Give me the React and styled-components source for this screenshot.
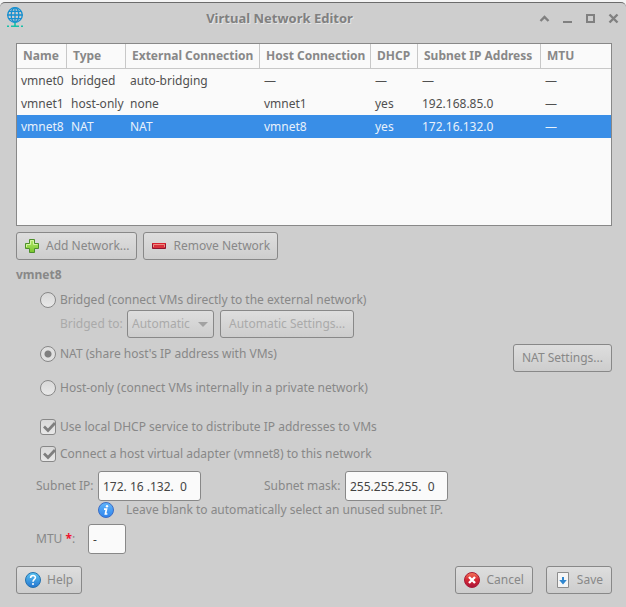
import React, { useState } from "react";
import styled, { createGlobalStyle } from "styled-components";

const GlobalStyle = createGlobalStyle`
  *, *::before, *::after { box-sizing: border-box; }
  body {
    margin: 0;
    background: #f4f4f4;
    color: #888;
    font: 12px/16px "Noto Sans", sans-serif;
  }
  button, input, select { font: inherit; color: inherit; margin: 0; }
`;

const Desktop = styled.div`
  display: flex;
  flex-direction: column;
  min-height: 100vh;
  padding-top: 2px;
`;

const Window = styled.main`
  flex: 1;
  display: flex;
  flex-direction: column;
  background: #cecece;
  border-top: 1px solid #6b6b6b;
  border-radius: 5px 5px 0 0;
`;

const TitleBar = styled.header`
  display: grid;
  grid-template-columns: 30px 1fr 96px;
  align-items: center;
  height: 30px;
  padding: 0 7px 0 6px;
`;

const Title = styled.h1`
  margin: 0;
  text-align: center;
  font-size: 13px;
  line-height: 20px;
  font-weight: 700;
  color: #808080;
  text-shadow: 1px 1px 0 #e6e6e6;
`;

const WindowControls = styled.div`
  display: flex;
  justify-content: flex-end;
  gap: 12px;
`;

const WindowButton = styled.button`
  display: flex;
  padding: 0;
  border: 0;
  background: none;
`;

const Content = styled.div`
  flex: 1;
  display: flex;
  flex-direction: column;
  padding: 10px 14px 12px 16px;
`;

const TableFrame = styled.div`
  height: 183px;
  border: 1px solid #888;
  background: #fafafa;
  overflow: hidden;
`;

const Table = styled.table`
  width: 100%;
  table-layout: fixed;
  border-collapse: separate;
  border-spacing: 0;
  text-align: left;
  white-space: nowrap;
`;

const Col = styled.col`
  width: ${(p) => p.$width};
`;

const HeadCell = styled.th`
  height: 25px;
  padding: 0 6px;
  border-right: 1px solid #c8c8c8;
  border-bottom: 1px solid #c8c8c8;
  font-weight: 700;
  &:last-child { border-right: 0; }
`;

const Row = styled.tr`
  background: ${(p) => (p.$selected ? "#398ee7" : "transparent")};
  color: ${(p) => (p.$selected ? "#e8f1fb" : "#505050")};
`;

const Cell = styled.td`
  height: 23px;
  padding: 0 4px;
`;

const Button = styled.button`
  display: inline-flex;
  align-items: center;
  justify-content: center;
  gap: 6px;
  height: 28px;
  padding: 0 8px;
  border: 1px solid #888;
  border-radius: 3px;
  background: linear-gradient(#dedede, #cdcdcd);
  white-space: nowrap;
  &:disabled { color: #aaa; }
  svg { flex: none; }
`;

const Toolbar = styled.div`
  display: flex;
  gap: 6px;
  margin-top: 6px;
  ${Button} { padding: 0 7px; }
`;

const Heading = styled.h2`
  margin: 7px 0 0;
  font-size: 12px;
  line-height: 16px;
  font-weight: 700;
`;

const Settings = styled.section`
  display: flex;
  flex-direction: column;
`;

const Modes = styled.fieldset`
  display: flex;
  flex-direction: column;
  margin: 0;
  min-width: 0;
  padding: 7px 0 0 24px;
  border: 0;
`;

const Adapters = styled.div`
  display: flex;
  flex-direction: column;
  gap: 3px;
  margin-top: 17px;
  padding-left: 24px;
`;

const Line = styled.div`
  display: flex;
  align-items: center;
  min-height: ${(p) => p.$height};
`;

const ActionLine = styled.div`
  display: flex;
  align-items: flex-start;
  justify-content: space-between;
  padding: 6px 0;
`;

const Choice = styled.label`
  display: inline-flex;
  align-items: center;
  gap: 4px;
  min-height: 20px;
`;

const Mark = styled.input`
  appearance: none;
  flex: none;
  width: 16px;
  height: 16px;
  border: 1px solid #888;
  background: linear-gradient(#d8d8d8, #e8e8e8);
`;

const Radio = styled(Mark).attrs({ type: "radio" })`
  border-radius: 50%;
  &:checked {
    background: radial-gradient(circle, #7f7f7f 3px, #e0e0e0 4px);
  }
`;

const CheckHolder = styled.span`
  display: grid;
  & > * { grid-area: 1 / 1; }
  svg { pointer-events: none; }
`;

const CheckInput = styled(Mark).attrs({ type: "checkbox" })`
  border-radius: 3px;
  &:not(:checked) + svg { visibility: hidden; }
`;

const BridgeRow = styled.div`
  display: grid;
  grid-template-columns: 61px auto auto;
  justify-content: start;
  align-items: center;
  gap: 6px;
  padding-left: 20px;
  color: #aaa;
  white-space: nowrap;
`;

const SelectHolder = styled.span`
  display: grid;
  align-items: center;
  & > * { grid-area: 1 / 1; }
  svg { justify-self: end; margin-right: 6px; pointer-events: none; }
`;

const Select = styled.select`
  appearance: none;
  width: 87px;
  height: 28px;
  padding: 0 20px 0 4px;
  border: 1px solid #888;
  border-radius: 3px;
  background: linear-gradient(#dedede, #cdcdcd);
  opacity: 1;
`;

const AddressGrid = styled.div`
  display: grid;
  grid-template-columns: 62px 103px 1fr;
  align-items: center;
  margin-top: 5px;
  padding-left: 20px;
`;

const MaskField = styled.div`
  display: grid;
  grid-template-columns: 81px auto;
  justify-content: start;
  align-items: center;
  padding-left: 63px;
  white-space: nowrap;
`;

const TextBox = styled.input.attrs({ type: "text" })`
  width: ${(p) => p.$width};
  height: 30px;
  padding: 0 4px;
  border: 1px solid #888;
  border-radius: 3px;
  background: #fafafa;
  color: #444;
`;

const Hint = styled.div`
  grid-column: 2 / -1;
  display: flex;
  align-items: center;
  gap: 12px;
  height: 18px;
`;

const MtuRow = styled.div`
  display: grid;
  grid-template-columns: 52px auto;
  justify-content: start;
  align-items: center;
  margin-top: 5px;
  padding-left: 20px;
`;

const Required = styled.strong`
  color: #f0142f;
`;

const Footer = styled.footer`
  display: flex;
  gap: 13px;
  margin-top: 12px;
  button:first-child { margin-right: auto; }
`;

function GlobeIcon() {
  return (
    <svg width="18" height="22" viewBox="0 0 18 22" fill="none" aria-hidden="true">
      <g stroke="#158fd0" strokeWidth="1.3">
        <circle cx="9" cy="8" r="7.3" />
        <ellipse cx="9" cy="8" rx="3.8" ry="7.3" />
        <path d="M1.4 8h15.2M9 1v15M2.7 4.3h12.6M2.7 11.7h12.6" />
      </g>
      <path d="M9 15.500v3.500M1 19.200h2M5 19.200h8M15 19.200h2" stroke="#16c0a8" strokeWidth="1.6" />
    </svg>
  );
}

const controlShapes = {
  "Roll up": <path d="M1.500 8l4-4 4 4" strokeWidth="2.400" />,
  Minimize: <path d="M1 9h9" strokeWidth="2" />,
  Maximize: <path d="M2 2h7v7h-7z" strokeWidth="2" />,
  Close: <path d="M1.5 1.5l8 8M9.5 1.5l-8 8" strokeWidth="2.400" />,
};

function PlusIcon() {
  return (
    <svg width="16" height="16" viewBox="0 0 16 16" aria-hidden="true">
      <defs>
        <linearGradient id="plus" x2="0" y2="1">
          <stop stopColor="#b7ea6c" />
          <stop offset="1" stopColor="#78c62c" />
        </linearGradient>
      </defs>
      <path d="M5.5 1.5h5v4h4v5h-4v4h-5v-4h-4v-5h4z" fill="url(#plus)" stroke="#4c8f2b" />
      <path d="M6.5 6.5v-4h3v4h4M2.5 9V6.5h4" fill="none" stroke="#d5f5a3" />
    </svg>
  );
}

function MinusIcon() {
  return (
    <svg width="16" height="16" viewBox="0 0 16 16" aria-hidden="true">
      <path d="M1.5 5.5h13v5h-13z" fill="#d8323d" stroke="#8f1530" />
      <path d="M2.5 9V6.5h11V9" fill="none" stroke="#f08a80" />
      <path d="M1 5.5h14" stroke="#d9202e" />
    </svg>
  );
}

function HelpIcon() {
  return (
    <svg width="16" height="16" viewBox="0 0 16 16" fill="none" aria-hidden="true">
      <defs>
        <linearGradient id="help" x2="0" y2="1">
          <stop stopColor="#5cc5f2" />
          <stop offset="1" stopColor="#2475d0" />
        </linearGradient>
      </defs>
      <circle cx="8" cy="8" r="7.5" fill="url(#help)" stroke="#2572ae" />
      <path d="M5.6 6c.1-3.3 5-3.2 4.8-.3C10.300 7.400 8 7.500 8 9.800" stroke="#fff" strokeWidth="1.6" />
      <circle cx="8" cy="12" r="1" fill="#fff" />
    </svg>
  );
}

function InfoIcon() {
  return (
    <svg width="16" height="16" viewBox="0 0 16 16" fill="none" aria-hidden="true">
      <defs>
        <linearGradient id="info" x2="0" y2="1">
          <stop stopColor="#62b6fb" />
          <stop offset="1" stopColor="#2d83ec" />
        </linearGradient>
      </defs>
      <circle cx="8" cy="8" r="7.500" fill="url(#info)" stroke="#3d6dc4" />
      <circle cx="9" cy="4.200" r="1.200" fill="#fff" />
      <path d="M6 7.200h2.500L7.400 12h2" stroke="#fff" strokeWidth="1.700" />
    </svg>
  );
}

function CancelIcon() {
  return (
    <svg width="16" height="16" viewBox="0 0 16 16" aria-hidden="true">
      <defs>
        <linearGradient id="cancel" x2="0" y2="1">
          <stop stopColor="#f47a5c" />
          <stop offset="0.45" stopColor="#d92c35" />
          <stop offset="1" stopColor="#a8123a" />
        </linearGradient>
      </defs>
      <circle cx="8" cy="8" r="7.5" fill="url(#cancel)" stroke="#a81c38" />
      <path d="M5 5l6 6M11 5l-6 6" stroke="#fff" strokeWidth="2.4" />
    </svg>
  );
}

function SaveIcon() {
  return (
    <svg width="16" height="16" viewBox="0 0 16 16" aria-hidden="true">
      <path d="M2.500.5h11v15h-11z" fill="#f5f5f5" stroke="#8d8d8d" />
      <path d="M7 5h2v3h2.800L8 12.500 4.200 8H7z" fill="#2f86cf" />
    </svg>
  );
}

function CheckBox(props) {
  return (
    <CheckHolder>
      <CheckInput {...props} />
      <svg width="16" height="16" viewBox="0 0 16 16" aria-hidden="true">
        <path d="M4 7.500l4 4L15 4" fill="none" stroke="#7f7f7f" strokeWidth="2.800" />
      </svg>
    </CheckHolder>
  );
}

const columns = [
  ["Name", "50px"],
  ["Type", "59px"],
  ["External Connection", "134px"],
  ["Host Connection", "111px"],
  ["DHCP", "47px"],
  ["Subnet IP Address", "123px"],
  ["MTU", "auto"],
];

const networks = [
  ["vmnet0", "bridged", "auto-bridging", "—", "—", "—", "—"],
  ["vmnet1", "host-only", "none", "vmnet1", "yes", "192.168.85.0", "—"],
  ["vmnet8", "NAT", "NAT", "vmnet8", "yes", "172.16.132.0", "—"],
];

export default function App() {
  const [selected, setSelected] = useState("vmnet8");
  const [mode, setMode] = useState("nat");
  const modeProps = (value) => ({
    name: "mode",
    checked: mode === value,
    onChange: () => setMode(value),
  });

  return (
    <Desktop>
      <GlobalStyle />
      <Window>
        <TitleBar>
          <GlobeIcon />
          <Title>Virtual Network Editor</Title>
          <WindowControls>
            {Object.entries(controlShapes).map(([label, shape]) => (
              <WindowButton key={label} type="button" aria-label={label}>
                <svg width="11" height="11" viewBox="0 0 11 11" fill="none" stroke="#808080">
                  {shape}
                </svg>
              </WindowButton>
            ))}
          </WindowControls>
        </TitleBar>

        <Content>
          <TableFrame>
            <Table>
              <colgroup>
                {columns.map(([name, width]) => <Col key={name} $width={width} />)}
              </colgroup>
              <thead>
                <tr>
                  {columns.map(([name]) => <HeadCell key={name} scope="col">{name}</HeadCell>)}
                </tr>
              </thead>
              <tbody>
                {networks.map((network) => (
                  <Row
                    key={network[0]}
                    $selected={network[0] === selected}
                    onClick={() => setSelected(network[0])}
                  >
                    {network.map((value, i) => <Cell key={i}>{value}</Cell>)}
                  </Row>
                ))}
              </tbody>
            </Table>
          </TableFrame>

          <Toolbar>
            <Button type="button"><PlusIcon />Add Network...</Button>
            <Button type="button"><MinusIcon />Remove Network</Button>
          </Toolbar>

          <Settings>
            <Heading>{selected}</Heading>
            <Modes aria-label="Network type">
              <Line $height="20px">
                <Choice><Radio {...modeProps("bridged")} />Bridged (connect VMs directly to the external network)</Choice>
              </Line>
              <BridgeRow>
                <label htmlFor="bridge">Bridged to:</label>
                <SelectHolder>
                  <Select id="bridge" disabled={mode !== "bridged"}>
                    <option>Automatic</option>
                  </Select>
                  <svg width="10" height="5" viewBox="0 0 10 5" aria-hidden="true">
                    <path d="M0 0h10L5 5z" fill="#a2a2a2" />
                  </svg>
                </SelectHolder>
                <Button type="button" disabled={mode !== "bridged"}>Automatic Settings...</Button>
              </BridgeRow>
              <ActionLine>
                <Choice><Radio {...modeProps("nat")} />NAT (share host's IP address with VMs)</Choice>
                <Button type="button">NAT Settings...</Button>
              </ActionLine>
              <Line $height="20px">
                <Choice><Radio {...modeProps("host")} />Host-only (connect VMs internally in a private network)</Choice>
              </Line>
            </Modes>

            <Adapters>
              <Line $height="24px">
                <Choice><CheckBox defaultChecked />Use local DHCP service to distribute IP addresses to VMs</Choice>
              </Line>
              <Line $height="24px">
                <Choice><CheckBox defaultChecked />Connect a host virtual adapter ({selected}) to this network</Choice>
              </Line>
            </Adapters>

            <AddressGrid>
              <label htmlFor="subnet">Subnet IP:</label>
              <TextBox id="subnet" $width="103px" defaultValue="172. 16 .132.  0" />
              <MaskField>
                <label htmlFor="mask">Subnet mask:</label>
                <TextBox id="mask" $width="103px" defaultValue="255.255.255.  0" />
              </MaskField>
              <Hint><InfoIcon />Leave blank to automatically select an unused subnet IP.</Hint>
            </AddressGrid>

            <MtuRow>
              <label htmlFor="mtu">MTU <Required>*</Required>:</label>
              <TextBox id="mtu" $width="38px" defaultValue="-" />
            </MtuRow>
          </Settings>

          <Footer>
            <Button type="button"><HelpIcon />Help</Button>
            <Button type="button"><CancelIcon />Cancel</Button>
            <Button type="button"><SaveIcon />Save</Button>
          </Footer>
        </Content>
      </Window>
    </Desktop>
  );
}
